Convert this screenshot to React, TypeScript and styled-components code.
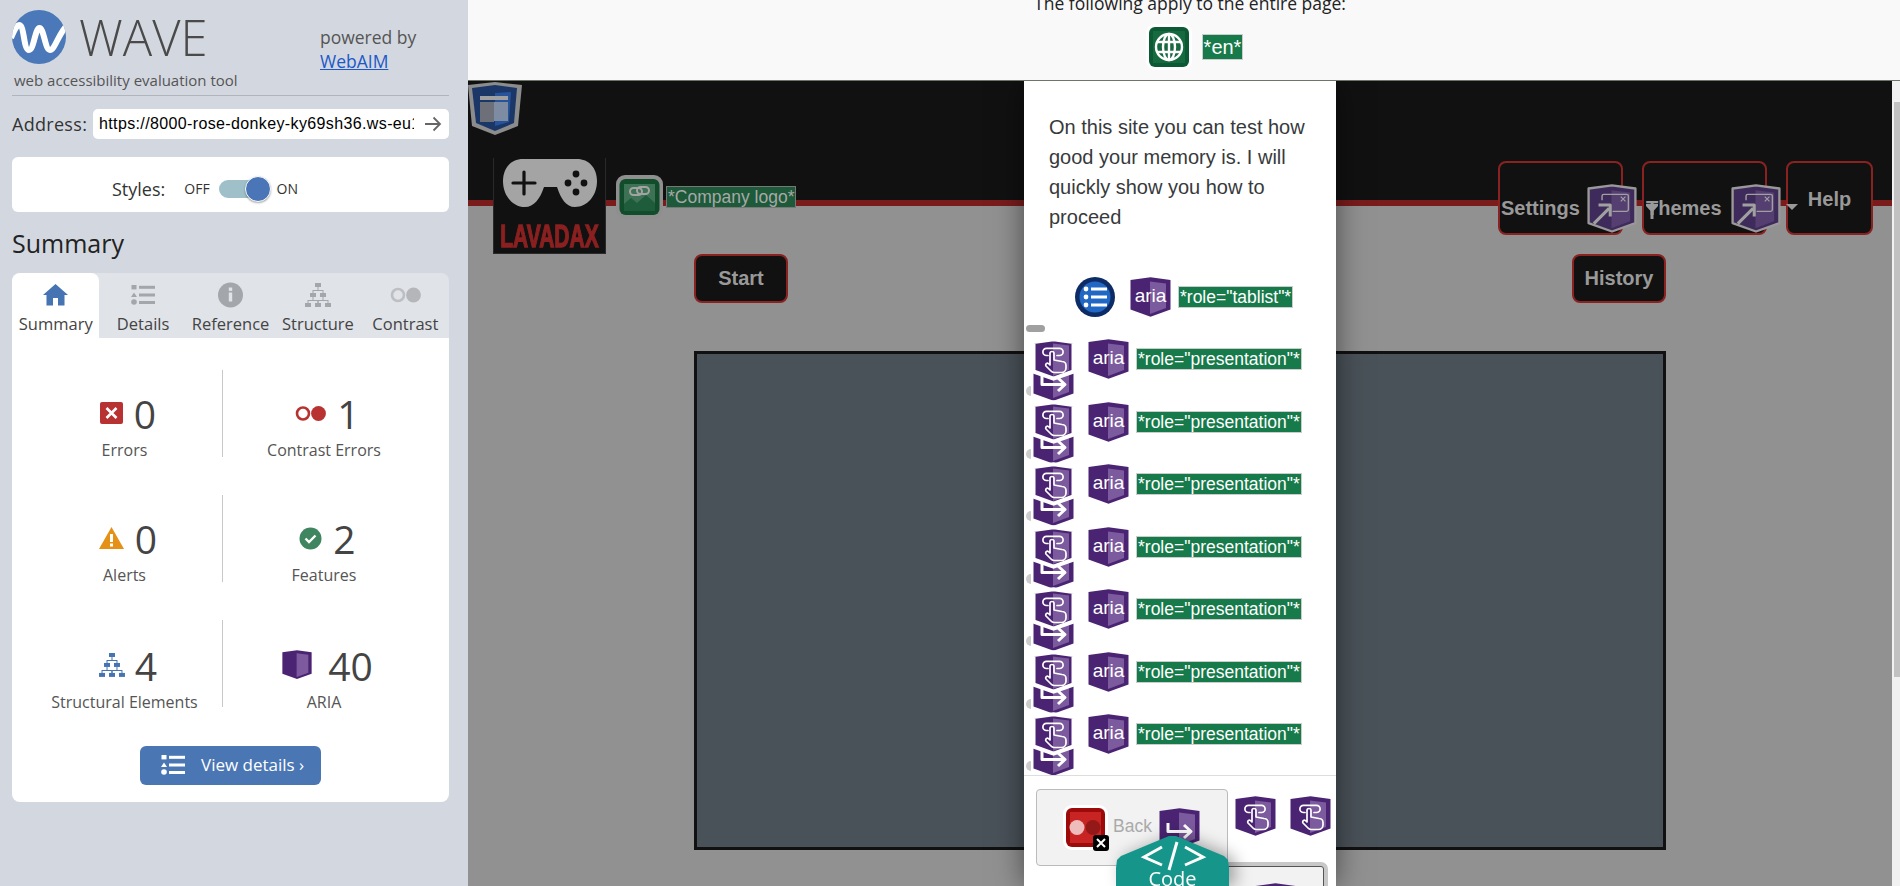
import styled, { createGlobalStyle } from 'styled-components'

const GlobalStyle = createGlobalStyle`
  html, body {
    margin: 0;
    height: 100%;
    overflow: hidden;
  }
  * {
    box-sizing: border-box;
  }
`

const sans = `'Open Sans', 'Noto Sans', sans-serif`
const arial = `'Liberation Sans', Arial, sans-serif`

const Shell = styled.div`
  display: flex;
  width: 1900px;
  height: 886px;
  overflow: hidden;
  font-family: ${sans};
`

/* ---------- WAVE sidebar ---------- */

const Sidebar = styled.aside`
  flex: none;
  width: 468px;
  height: 886px;
  padding: 10px 19px 0 12px;
  background: #d3d8e0;
`

const Brand = styled.div`
  height: 86px;
  border-bottom: 1px solid #b0b5bc;
`

const BrandTop = styled.div`
  display: flex;
  align-items: flex-start;
  height: 56px;
`

const WaveName = styled.div`
  margin: -6px 0 0 13px;
  font-size: 49px;
  font-weight: 300;
  line-height: 67px;
  color: #4a4a4a;
`

const Powered = styled.div`
  width: 129px;
  margin: 15px 0 0 auto;
  font-size: 17.5px;
  line-height: 24px;
  color: #555;
  a {
    color: #2058c8;
  }
`

const Tagline = styled.div`
  margin: 5px 0 0 2px;
  font-size: 15px;
  line-height: 18px;
  color: #555;
`

const AddressRow = styled.div`
  display: flex;
  align-items: center;
  height: 30px;
  margin-top: 13px;
`

const AddressLabel = styled.span`
  flex: none;
  width: 81px;
  font-size: 18px;
  letter-spacing: 0.3px;
  color: #333;
`

const AddressBox = styled.div`
  position: relative;
  flex: 1;
  display: flex;
  align-items: center;
  height: 30px;
  padding: 0 0 0 6px;
  border-radius: 5px;
  background: #fff;
  color: #000;
  font-family: ${arial};
  font-size: 16px;
  letter-spacing: 0.37px;
  overflow: hidden;
  white-space: nowrap;
  svg {
    position: absolute;
    right: 0;
    top: 5px;
  }
`

const StylesCard = styled.div`
  display: flex;
  align-items: center;
  height: 55px;
  margin-top: 18px;
  padding: 8px 0 0 100px;
  border-radius: 6px;
  background: #fff;
  font-size: 18px;
  color: #333;
`

const ToggleText = styled.span<{ $gap: number }>`
  font-size: 14px;
  margin-left: ${({ $gap }) => $gap}px;
`

const ToggleTrack = styled.div`
  position: relative;
  width: 40px;
  height: 18px;
  margin-left: 9px;
  border-radius: 9px;
  background: #9fc0c8;
`

const ToggleKnob = styled.div`
  position: absolute;
  top: -4px;
  left: 26px;
  width: 26px;
  height: 26px;
  border: 1px solid #fff;
  border-radius: 50%;
  background: #4a76b8;
  box-shadow: 0 1px 2px rgba(0, 0, 0, 0.35);
`

const Heading = styled.h2`
  margin: 14px 0 13px;
  font-size: 25px;
  font-weight: 400;
  line-height: 34px;
  color: #222;
`

const Tabs = styled.div`
  display: flex;
  height: 65px;
  border-radius: 8px 8px 0 0;
  background: #e0e3e8;
`

const Tab = styled.div<{ $active?: boolean }>`
  flex: 1;
  display: flex;
  flex-direction: column;
  align-items: center;
  padding-top: 9px;
  border-radius: 8px 8px 0 0;
  background: ${({ $active }) => ($active ? '#fff' : 'transparent')};
  font-size: 16.5px;
  color: #444;
  white-space: nowrap;
  svg {
    height: 26px;
  }
  span {
    margin-top: 5px;
    line-height: 22px;
  }
`

const Panel = styled.div`
  height: 464px;
  padding-top: 32px;
  border-radius: 0 0 8px 8px;
  background: #fff;
`

const StatGrid = styled.div`
  display: grid;
  grid-template-columns: 210px 227px;
  grid-auto-rows: 87px;
  row-gap: 38px;
`

const Stat = styled.div<{ $right?: boolean; $low?: boolean }>`
  display: flex;
  flex-direction: column;
  align-items: center;
  padding: ${({ $low }) => ($low ? '19px' : '17px')} ${({ $right }) => ($right ? '24px' : '0')} 0
    ${({ $right }) => ($right ? '0' : '15px')};
  border-left: ${({ $right }) => ($right ? '1px solid #c8c8c8' : 'none')};
`

const StatTop = styled.div<{ $gap: number }>`
  display: flex;
  align-items: center;
  gap: ${({ $gap }) => $gap}px;
  height: 52px;
  padding-left: 7px;
  font-size: 39px;
  font-weight: 400;
  color: #444;
`

const StatLabel = styled.div`
  font-size: 16px;
  line-height: 22px;
  color: #555;
  white-space: nowrap;
`

const DetailsButton = styled.div`
  display: flex;
  align-items: center;
  gap: 16px;
  width: 181px;
  height: 39px;
  margin: 39px auto 0;
  padding: 0 0 2px 21px;
  border-radius: 6px;
  background: #4a76b4;
  font-size: 17px;
  color: #fff;
  white-space: nowrap;
`

/* ---------- page under evaluation ---------- */

const Main = styled.main`
  flex: 1;
  display: flex;
  flex-direction: column;
  min-width: 0;
`

const TopBand = styled.div`
  flex: none;
  display: flex;
  flex-direction: column;
  align-items: center;
  height: 81px;
  padding-left: 12px;
  border-bottom: 1px solid #6b7568;
  background: #f9f9f9;
  overflow: hidden;
  font-size: 17.5px;
  color: #222;
`

const BandTitle = styled.div`
  margin-top: -9px;
  line-height: 24px;
  white-space: nowrap;
`

const BandIcons = styled.div`
  display: flex;
  align-items: center;
  gap: 10px;
  margin: 9px 0 0 9px;
`

const Tag = styled.span<{ $dim?: boolean }>`
  display: inline-block;
  padding: 0 1px;
  border: 1px solid ${({ $dim }) => ($dim ? '#777' : '#ccc')};
  background: ${({ $dim }) => ($dim ? '#1d5a39' : '#177a4a')};
  color: ${({ $dim }) => ($dim ? '#a8a8a8' : '#fff')};
  font-family: ${arial};
  font-size: 17.5px;
  line-height: 20px;
  white-space: nowrap;
`

const EnTag = styled(Tag)`
  padding: 0 1px;
  font-size: 20px;
  line-height: 24px;
`

const Page = styled.div`
  position: relative;
  flex: 1;
  display: flex;
  min-height: 0;
`

const PageBody = styled.div`
  position: relative;
  flex: 1;
  min-width: 0;
  background: #919191;
  overflow: hidden;
`

const Scrollbar = styled.div`
  flex: none;
  width: 8px;
  padding: 21px 0 0 2px;
  background: #f1f1f1;
`

const ScrollThumb = styled.div`
  height: 575px;
  background: #c1c1c1;
`

const Landmark = styled.div`
  position: absolute;
  top: 1px;
  left: 0;
  z-index: 2;
`

const Header = styled.header`
  display: flex;
  align-items: flex-start;
  height: 125px;
  padding: 77px 19px 0 25px;
  border-bottom: 6px solid #7a1c1c;
  background: #111;
`

const LogoBox = styled.div`
  flex: none;
  display: flex;
  flex-direction: column;
  align-items: center;
  width: 113px;
  height: 96px;
  padding-top: 1px;
  background: #111;
  border: 1px solid #2a2a2a;
  border-top: none;
`

const LogoWord = styled.div`
  margin-top: 23px;
  font-family: ${arial};
  font-size: 21px;
  font-weight: 700;
  line-height: 14px;
  color: #8b2020;
  -webkit-text-stroke: 0.9px #8b2020;
  transform: scaleY(1.45);
  white-space: nowrap;
`

const LogoLink = styled.div`
  flex: none;
  margin: 17px 0 0 10px;
`

const LogoTag = styled(Tag)`
  margin: 28px 0 0 3px;
`

const Nav = styled.nav`
  display: flex;
  gap: 19px;
  margin: 3px 0 0 auto;
`

const NavButton = styled.div<{ $width: number; $inset: number }>`
  position: relative;
  width: ${({ $width }) => $width}px;
  height: 74px;
  padding: 34px 0 0 ${({ $inset }) => $inset}px;
  border: 2px solid #8b2222;
  border-radius: 8px;
  background: #111;
  font-family: ${arial};
  font-size: 20px;
  font-weight: 700;
  line-height: 23px;
  color: #999;
`

const HelpButton = styled(NavButton)`
  padding: 25px 0 0;
  text-align: center;
`

const NavShield = styled.div`
  position: absolute;
  top: 22px;
  left: 88px;
`

const Funnel = styled.div`
  position: absolute;
  top: 38px;
  left: 2px;
`

const Caret = styled.div`
  position: absolute;
  top: 41px;
  left: 142px;
  z-index: 2;
  width: 0;
  height: 0;
  border-top: 6px solid #999;
  border-left: 6px solid transparent;
  border-right: 6px solid transparent;
`

const Actions = styled.div`
  display: flex;
  justify-content: space-between;
  width: 972px;
  margin: 48px 0 48px 226px;
`

const ActionButton = styled.div`
  display: flex;
  align-items: center;
  justify-content: center;
  width: 94px;
  height: 49px;
  border: 2px solid #8b2222;
  border-radius: 8px;
  background: #111;
  font-family: ${arial};
  font-size: 20px;
  font-weight: 700;
  color: #999;
`

const Board = styled.div`
  width: 972px;
  height: 499px;
  margin-left: 226px;
  border: 3px solid #111;
  background: #4a5259;
`

/* ---------- open dialog ---------- */

const Modal = styled.div`
  position: absolute;
  top: 0;
  bottom: 0;
  left: 556px;
  z-index: 3;
  display: flex;
  flex-direction: column;
  width: 312px;
  background: #fff;
  box-shadow: 0 0 28px rgba(0, 0, 0, 0.5);
  overflow: hidden;
`

const Intro = styled.p`
  margin: 31px 0 0;
  padding: 0 25px;
  font-family: ${arial};
  font-size: 20px;
  line-height: 30px;
  color: #373a3c;
`

const TabListRow = styled.div`
  display: flex;
  align-items: center;
  height: 40px;
  margin: 45px 0 22px;
  padding-left: 51px;
`

const TabListIcon = styled.div`
  margin-right: 15px;
  height: 40px;
`

const ScrollPill = styled.div`
  position: absolute;
  top: 244px;
  left: 2px;
  width: 19px;
  height: 7px;
  border-radius: 4px;
  background: #a0a0a0;
`

const RoleList = styled.div`
  flex: none;
  height: 436px;
  padding-left: 9px;
  overflow: hidden;
`

const RoleRow = styled.div`
  position: relative;
  display: flex;
  align-items: flex-start;
  height: 62.5px;
`

const RoleStack = styled.div`
  position: relative;
  flex: none;
  width: 41px;
  height: 40px;
  margin-right: 14px;
`

const ArrowBehind = styled.div`
  position: absolute;
  top: 22px;
  left: 0;
`

const TapFront = styled.div`
  position: absolute;
  top: 0;
  left: 0;
`

const RoleAria = styled.div`
  flex: none;
  height: 40px;
  margin-right: 7px;
`

const RoleTag = styled(Tag)`
  margin-top: 9px;
`

const HalfDot = styled.div`
  position: absolute;
  top: 47px;
  left: -7px;
  width: 5px;
  height: 10px;
  border-radius: 5px 0 0 5px;
  background: #ccc;
`

const Footer = styled.div`
  flex: 1;
  padding: 13px 0 0 12px;
  border-top: 1px solid #ddd;
`

const FooterRow = styled.div`
  display: flex;
  align-items: flex-start;
`

const BackButton = styled.div`
  position: relative;
  display: flex;
  align-items: center;
  flex: none;
  width: 192px;
  height: 77px;
  padding-left: 26px;
  border: 1px solid #bbb;
  border-radius: 4px;
  background: #f2f2f2;
  font-family: ${arial};
  font-size: 17.5px;
  color: #aaa;
`

const BackLabel = styled.span`
  margin: -2px 7px 0 5px;
`

const CloseBadge = styled.div`
  position: absolute;
  top: 45px;
  left: 56px;
  display: flex;
  align-items: center;
  justify-content: center;
  width: 16px;
  height: 16px;
  border-radius: 3px;
  background: #000;
`

const FooterTaps = styled.div`
  display: flex;
  gap: 14px;
  margin: 7px 0 0 7px;
`

const NextButton = styled.div`
  width: 150px;
  height: 60px;
  margin-left: 138px;
  padding: 16px 0 0 80px;
  border: 1px solid #555;
  border-radius: 3px;
  background: #f2f2f2;
  box-shadow: 0 0 0 4px #c8c8c8;
`

const CodeTab = styled.div`
  position: absolute;
  top: 755px;
  left: 92px;
  width: 113px;
  height: 50px;
  filter: drop-shadow(6px 0 8px rgba(0, 0, 0, 0.35));
`

const CodeShape = styled.div`
  position: relative;
  display: flex;
  justify-content: center;
  width: 100%;
  height: 100%;
  padding-top: 30px;
  background: #16968a;
  clip-path: polygon(0 32px, 1px 24px, 5px 20px, 53px 0, 60px 0, 108px 20px, 112px 24px, 113px 32px, 113px 50px, 0 50px);
  color: #fff;
  font-size: 20px;
  line-height: 26px;
  svg {
    position: absolute;
    top: 0;
    left: 0;
  }
`

/* ---------- icons ---------- */

const Shield = ({
  outline,
  children,
  size = 41,
  base = '#4a2472',
  panel = '#7c5a9e',
  halo = 2,
}: {
  outline?: string
  children?: React.ReactNode
  size?: number
  base?: string
  panel?: string
  halo?: number
}) => (
  <svg width={size} height={(size * 40) / 41} viewBox="0 0 41 40" style={{ display: 'block', overflow: 'visible' }}>
    <path
      d="M0.5 3 L20.5 0.3 L40.5 3 V32.5 L20.5 39.7 L0.5 32.5 Z"
      fill={base}
      stroke={outline ?? 'none'}
      strokeWidth={outline ? halo : 0}
      strokeLinejoin="round"
    />
    <path d="M20 4.5 L36 6.5 V31 L20 37 Z" fill={panel} />
    {children}
  </svg>
)

const TapMark = ({ outline }: { outline?: string }) => (
  <Shield outline={outline} halo={4}>
    <g fill="none" stroke="#fff" strokeWidth="1.7" strokeLinejoin="round" strokeLinecap="round">
      <path d="M15 16.5 H13.5 a3.6 3.6 0 0 1 0 -7.2 H26.5 a3.6 3.6 0 0 1 0 7.2 H24" />
      <path d="M17 26 V14.5 a2 2 0 0 1 4 0 V21 l8 1.5 a4 4 0 0 1 4 4 v2.5 a4.5 4.5 0 0 1 -4.5 4.5 H21 a4 4 0 0 1 -3 -1.5 L13 27 a1.8 1.8 0 0 1 3 -2 Z" />
    </g>
  </Shield>
)

const ArrowMark = () => (
  <Shield>
    <g fill="none" stroke="#fff" strokeWidth="3" strokeLinejoin="round">
      <path d="M9 15 V23.5 H31" />
      <path d="M25 17 L32 23.5 L25 30" />
    </g>
  </Shield>
)

const AriaMark = () => (
  <Shield>
    <text x="20.5" y="25" textAnchor="middle" fill="#fff" fontFamily={arial} fontSize="19">
      aria
    </text>
  </Shield>
)

const ExpandMark = () => (
  <Shield size={48} outline="#999" base="#3f2a5c" panel="#553f70">
    <g fill="none" stroke="#a0a0a0" strokeLinejoin="round">
      <path strokeWidth="1.2" d="M12 13 V9.5 a1.5 1.5 0 0 1 1.5 -1.5 H33 a1.5 1.5 0 0 1 1.5 1.5 V21 a1.5 1.5 0 0 1 -1.5 1.5 H21" />
      <path strokeWidth="2.6" d="M5 33 L18 20 M9 17 H19 V27" />
      <path strokeWidth="1" d="M28 10 L32 14 M32 10 L28 14" />
    </g>
  </Shield>
)

const ListGlyph = ({ color, width = 24 }: { color: string; width?: number }) => (
  <svg width={width} height={(width * 20) / 24} viewBox="0 0 24 20" fill={color}>
    <rect x="0.5" y="0" width="5" height="4.4" />
    <path d="M3 7.5 L6 12 H0 Z" />
    <circle cx="3" cy="17" r="2.8" />
    <rect x="8" y="0.8" width="16" height="3" />
    <rect x="8" y="8.5" width="16" height="3" />
    <rect x="8" y="16" width="16" height="3" />
  </svg>
)

const StructureGlyph = ({ color, width = 26 }: { color: string; width?: number }) => (
  <svg width={width} height={width * 0.92} viewBox="0 0 26 24" fill={color}>
    <rect x="10" y="0" width="6" height="4" />
    <rect x="5" y="10" width="6" height="4" />
    <rect x="15" y="10" width="6" height="4" />
    <rect x="0" y="20" width="6" height="4" />
    <rect x="10" y="20" width="6" height="4" />
    <rect x="20" y="20" width="6" height="4" />
    <path d="M12.5 4 h1 V7 H18.5 V10 h-1 V8 H8.5 V10 h-1 V7 H12.5 Z" />
    <path d="M7.5 14 h1 V17 H13.5 V20 h-1 V18 H3.5 V20 h-1 V17 H7.5 Z" />
    <path d="M17.5 14 h1 V17 H23.5 V20 h-1 V18 H13.5 V20 h-1 V17 H17.5 Z" />
  </svg>
)

const ContrastGlyph = ({ color, solid = color }: { color: string; solid?: string }) => (
  <svg width="31" height="17" viewBox="0 0 31 17">
    <circle cx="8" cy="8.5" r="6" fill="none" stroke={color} strokeWidth="2.6" />
    <circle cx="23.5" cy="8.5" r="7.4" fill={solid} />
  </svg>
)

const WaveLogo = () => (
  <svg width="54" height="54" viewBox="0 0 54 54">
    <clipPath id="wave-clip">
      <circle cx="27" cy="27" r="27" />
    </clipPath>
    <circle cx="27" cy="27" r="27" fill="#4a78b8" />
    <path
      clipPath="url(#wave-clip)"
      d="M-1 28 C3 18 6 13 9 16 C12 19 12 40 17 40 C22 40 23 18 27.5 18 C32 18 33 40 38 40 C43 40 46 24 56 14"
      fill="none"
      stroke="#fff"
      strokeWidth="6"
    />
  </svg>
)

const stats = [
  { label: 'Errors', value: '0', kind: 'error', gap: 11 },
  { label: 'Contrast Errors', value: '1', kind: 'contrast', gap: 11 },
  { label: 'Alerts', value: '0', kind: 'alert', gap: 11 },
  { label: 'Features', value: '2', kind: 'feature', gap: 11 },
  { label: 'Structural Elements', value: '4', kind: 'structure', gap: 10 },
  { label: 'ARIA', value: '40', kind: 'aria', gap: 16 },
]

const StatIcon = ({ kind }: { kind: string }) => {
  if (kind === 'error')
    return (
      <svg width="23" height="22" viewBox="0 0 23 22">
        <rect width="23" height="22" rx="2" fill="#b83232" />
        <path d="M6.5 6 L16.5 16 M16.5 6 L6.5 16" stroke="#fff" strokeWidth="2.6" />
      </svg>
    )
  if (kind === 'contrast') return <ContrastGlyph color="#b83232" />
  if (kind === 'alert')
    return (
      <svg width="25" height="22" viewBox="0 0 25 22">
        <path d="M12.5 0 L25 22 H0 Z" fill="#e59016" />
        <rect x="11" y="7" width="3" height="8" fill="#fff" />
        <rect x="11" y="16.5" width="3" height="3" fill="#fff" />
      </svg>
    )
  if (kind === 'feature')
    return (
      <svg width="23" height="23" viewBox="0 0 23 23">
        <circle cx="11.5" cy="11.5" r="11" fill="#3f8560" />
        <path d="M6.5 11.5 L10 15 L16.5 8.5" fill="none" stroke="#fff" strokeWidth="2.4" />
      </svg>
    )
  if (kind === 'structure') return <StructureGlyph color="#4673b2" />
  return <Shield size={30} panel="#7d5a9e" />
}

const tabs = ['Summary', 'Details', 'Reference', 'Structure', 'Contrast']

const TabIcon = ({ name }: { name: string }) => {
  if (name === 'Summary')
    return (
      <svg width="25" height="22" viewBox="0 0 25 22" fill="#4673b2">
        <path d="M12.5 0 L25 11 H21.5 V21.5 H15 V14 H10 V21.5 H3.5 V11 H0 Z" />
      </svg>
    )
  if (name === 'Details') return <ListGlyph color="#a3a6ab" />
  if (name === 'Reference')
    return (
      <svg width="25" height="25" viewBox="0 0 25 25">
        <circle cx="12.5" cy="12.5" r="12.5" fill="#a3a6ab" />
        <rect x="10.8" y="5" width="3.4" height="3.4" fill="#e0e3e8" />
        <rect x="10.8" y="10" width="3.4" height="9" fill="#e0e3e8" />
      </svg>
    )
  if (name === 'Structure') return <StructureGlyph color="#a3a6ab" />
  return <ContrastGlyph color="#bdbfc3" solid="#b4b6ba" />
}

const App = () => (
  <Shell>
    <GlobalStyle />
    <Sidebar>
      <Brand>
        <BrandTop>
          <WaveLogo />
          <WaveName>WAVE</WaveName>
          <Powered>
            powered by
            <br />
            <a href="#webaim">WebAIM</a>
          </Powered>
        </BrandTop>
        <Tagline>web accessibility evaluation tool</Tagline>
      </Brand>
      <AddressRow>
        <AddressLabel>Address:</AddressLabel>
        <AddressBox>
          https://8000-rose-donkey-ky69sh36.ws-eu1
          <svg width="35" height="20" viewBox="0 0 35 20" fill="#fff">
            <rect x="0" y="0" width="35" height="20" />
            <path d="M11 10 H26 M19.5 3.5 L26 10 L19.5 16.5" fill="none" stroke="#666" strokeWidth="1.8" />
          </svg>
        </AddressBox>
      </AddressRow>
      <StylesCard>
        Styles:
        <ToggleText $gap={19}>OFF</ToggleText>
        <ToggleTrack>
          <ToggleKnob />
        </ToggleTrack>
        <ToggleText $gap={18}>ON</ToggleText>
      </StylesCard>
      <Heading>Summary</Heading>
      <Tabs>
        {tabs.map((name) => (
          <Tab key={name} $active={name === 'Summary'}>
            <TabIcon name={name} />
            <span>{name}</span>
          </Tab>
        ))}
      </Tabs>
      <Panel>
        <StatGrid>
          {stats.map((stat, i) => (
            <Stat key={stat.label} $right={i % 2 === 1} $low={i > 3}>
              <StatTop $gap={stat.gap}>
                <StatIcon kind={stat.kind} />
                {stat.value}
              </StatTop>
              <StatLabel>{stat.label}</StatLabel>
            </Stat>
          ))}
        </StatGrid>
        <DetailsButton>
          <ListGlyph color="#fff" />
          View details ›
        </DetailsButton>
      </Panel>
    </Sidebar>

    <Main>
      <TopBand>
        <BandTitle>The following apply to the entire page:</BandTitle>
        <BandIcons>
          <svg width="46" height="46" viewBox="0 0 46 46">
            <rect width="46" height="46" rx="9" fill="#fff" />
            <rect x="3" y="3" width="40" height="40" rx="6" fill="#0b5a33" />
            <rect x="7" y="7" width="32" height="32" fill="#17693f" />
            <g fill="none" stroke="#fff" strokeWidth="2.4">
              <circle cx="23" cy="23" r="13" />
              <ellipse cx="23" cy="23" rx="6" ry="13" />
              <path d="M11 18 H35 M11 28 H35 M23 10 V36" />
            </g>
          </svg>
          <EnTag>*en*</EnTag>
        </BandIcons>
      </TopBand>

      <Page>
        <PageBody>
          <Landmark>
            <svg width="54" height="54" viewBox="0 0 54 54">
              <path d="M0 3 L27 0 L54 3 L50 44 L27 53 L4 44 Z" fill="#8c8c8c" />
              <path d="M4 6 L27 3 L49 6 L46 41 L27 49 L8 41 Z" fill="#1b3768" />
              <path d="M27 11 L43 10 L41 40 L27 44 Z" fill="#26539a" />
              <rect x="12" y="14" width="28" height="4" fill="#a0a0a0" />
              <rect x="12" y="20" width="14" height="20" fill="#6d7078" />
              <rect x="26" y="20" width="14" height="19" fill="#7d8ca3" />
            </svg>
          </Landmark>

          <Header>
            <LogoBox>
              <svg width="94" height="48" viewBox="0 0 94 48">
                <path
                  d="M20 0 H74 C86 0 94 9 94 22 C94 37 84 48 72 48 C63 48 58 40 54 28 H41 C37 40 31 48 22 48 C10 48 0 37 0 22 C0 9 8 0 20 0 Z"
                  fill="#a4a4a4"
                />
                <path d="M21 13 V35 M10 24 H32" stroke="#111" strokeWidth="3.2" strokeLinecap="round" />
                <circle cx="73" cy="15" r="3.4" fill="#111" />
                <circle cx="73" cy="33" r="3.4" fill="#111" />
                <circle cx="65" cy="24" r="3.4" fill="#111" />
                <circle cx="81" cy="24" r="3.4" fill="#111" />
              </svg>
              <LogoWord>LAVADAX</LogoWord>
            </LogoBox>
            <LogoLink>
              <svg width="47" height="44" viewBox="0 0 47 44">
                <rect width="47" height="44" rx="9" fill="#8f8f8f" />
                <rect x="3.5" y="4" width="40" height="36" rx="6" fill="#114d2b" />
                <rect x="8" y="9" width="31" height="27" fill="#3d7254" />
                <path d="M8 36 V29 L15 23 L21 28 L30 20 L39 28 V36 Z" fill="#1f5c3b" />
                <g fill="none" stroke="#a3a3a3" strokeWidth="2">
                  <rect x="14" y="13" width="12" height="7" rx="3.5" />
                  <rect x="21" y="12" width="12" height="7" rx="3.5" />
                </g>
              </svg>
            </LogoLink>
            <LogoTag $dim>*Company logo*</LogoTag>
            <Nav>
              <NavButton $width={125} $inset={1}>
                Settings
                <NavShield>
                  <ExpandMark />
                </NavShield>
              </NavButton>
              <NavButton $width={125} $inset={2}>
                Themes
                <Funnel>
                  <svg width="12" height="15" viewBox="0 0 12 15" fill="#999">
                    <path d="M0 0 H12 V2 L7.5 7 V15 H4.5 V7 L0 2 Z" />
                  </svg>
                </Funnel>
                <NavShield>
                  <ExpandMark />
                </NavShield>
                <Caret />
              </NavButton>
              <HelpButton $width={87} $inset={0}>
                Help
              </HelpButton>
            </Nav>
          </Header>

          <Actions>
            <ActionButton>Start</ActionButton>
            <ActionButton>History</ActionButton>
          </Actions>
          <Board />

          <Modal>
            <Intro>
              On this site you can test how good your memory is. I will quickly show you how to proceed
            </Intro>
            <TabListRow>
              <TabListIcon>
                <svg width="40" height="40" viewBox="0 0 40 40">
                  <circle cx="20" cy="20" r="20" fill="#0d2c66" />
                  <circle cx="20" cy="20" r="15.5" fill="#2168c4" />
                  <g fill="#fff">
                    <circle cx="11" cy="12" r="2.4" />
                    <circle cx="11" cy="20" r="2.4" />
                    <circle cx="11" cy="28" r="2.4" />
                    <rect x="16" y="10.5" width="16" height="3" />
                    <rect x="16" y="18.5" width="16" height="3" />
                    <rect x="16" y="26.5" width="16" height="3" />
                  </g>
                </svg>
              </TabListIcon>
              <RoleAria>
                <AriaMark />
              </RoleAria>
              <Tag>*role="tablist"*</Tag>
            </TabListRow>
            <ScrollPill />
            <RoleList>
              {Array.from({ length: 7 }, (_, i) => (
                <RoleRow key={i}>
                  <RoleStack>
                    <ArrowBehind>
                      <ArrowMark />
                    </ArrowBehind>
                    <TapFront>
                      <TapMark outline="#fff" />
                    </TapFront>
                    <HalfDot />
                  </RoleStack>
                  <RoleAria>
                    <AriaMark />
                  </RoleAria>
                  <RoleTag>*role="presentation"*</RoleTag>
                </RoleRow>
              ))}
            </RoleList>
            <Footer>
              <FooterRow>
                <BackButton>
                  <svg width="45" height="45" viewBox="0 0 45 45">
                    <rect width="45" height="45" rx="9" fill="#fff" />
                    <rect x="3" y="3" width="39" height="39" rx="6" fill="#9c0a0a" />
                    <rect x="7" y="7" width="31" height="31" fill="#c92424" />
                    <circle cx="14" cy="22.5" r="7.5" fill="#efbcbc" />
                    <circle cx="30" cy="22.5" r="7.5" fill="#941818" />
                  </svg>
                  <CloseBadge>
                    <svg width="10" height="10" viewBox="0 0 10 10">
                      <path d="M1 1 L9 9 M9 1 L1 9" stroke="#fff" strokeWidth="2" />
                    </svg>
                  </CloseBadge>
                  <BackLabel>Back</BackLabel>
                  <ArrowMark />
                </BackButton>
                <FooterTaps>
                  <TapMark />
                  <TapMark />
                </FooterTaps>
              </FooterRow>
              <NextButton>
                <ArrowMark />
              </NextButton>
            </Footer>
            <CodeTab>
              <CodeShape>
                <svg width="113" height="50" viewBox="0 0 113 50" fill="none" stroke="#fff" strokeWidth="3">
                  <path d="M46 11 L28 21 L46 29" />
                  <path d="M69 11 L87 21 L69 29" />
                  <path d="M61 6 L53 34" />
                </svg>
                Code
              </CodeShape>
            </CodeTab>
          </Modal>
        </PageBody>
        <Scrollbar>
          <ScrollThumb />
        </Scrollbar>
      </Page>
    </Main>
  </Shell>
)

export default App
